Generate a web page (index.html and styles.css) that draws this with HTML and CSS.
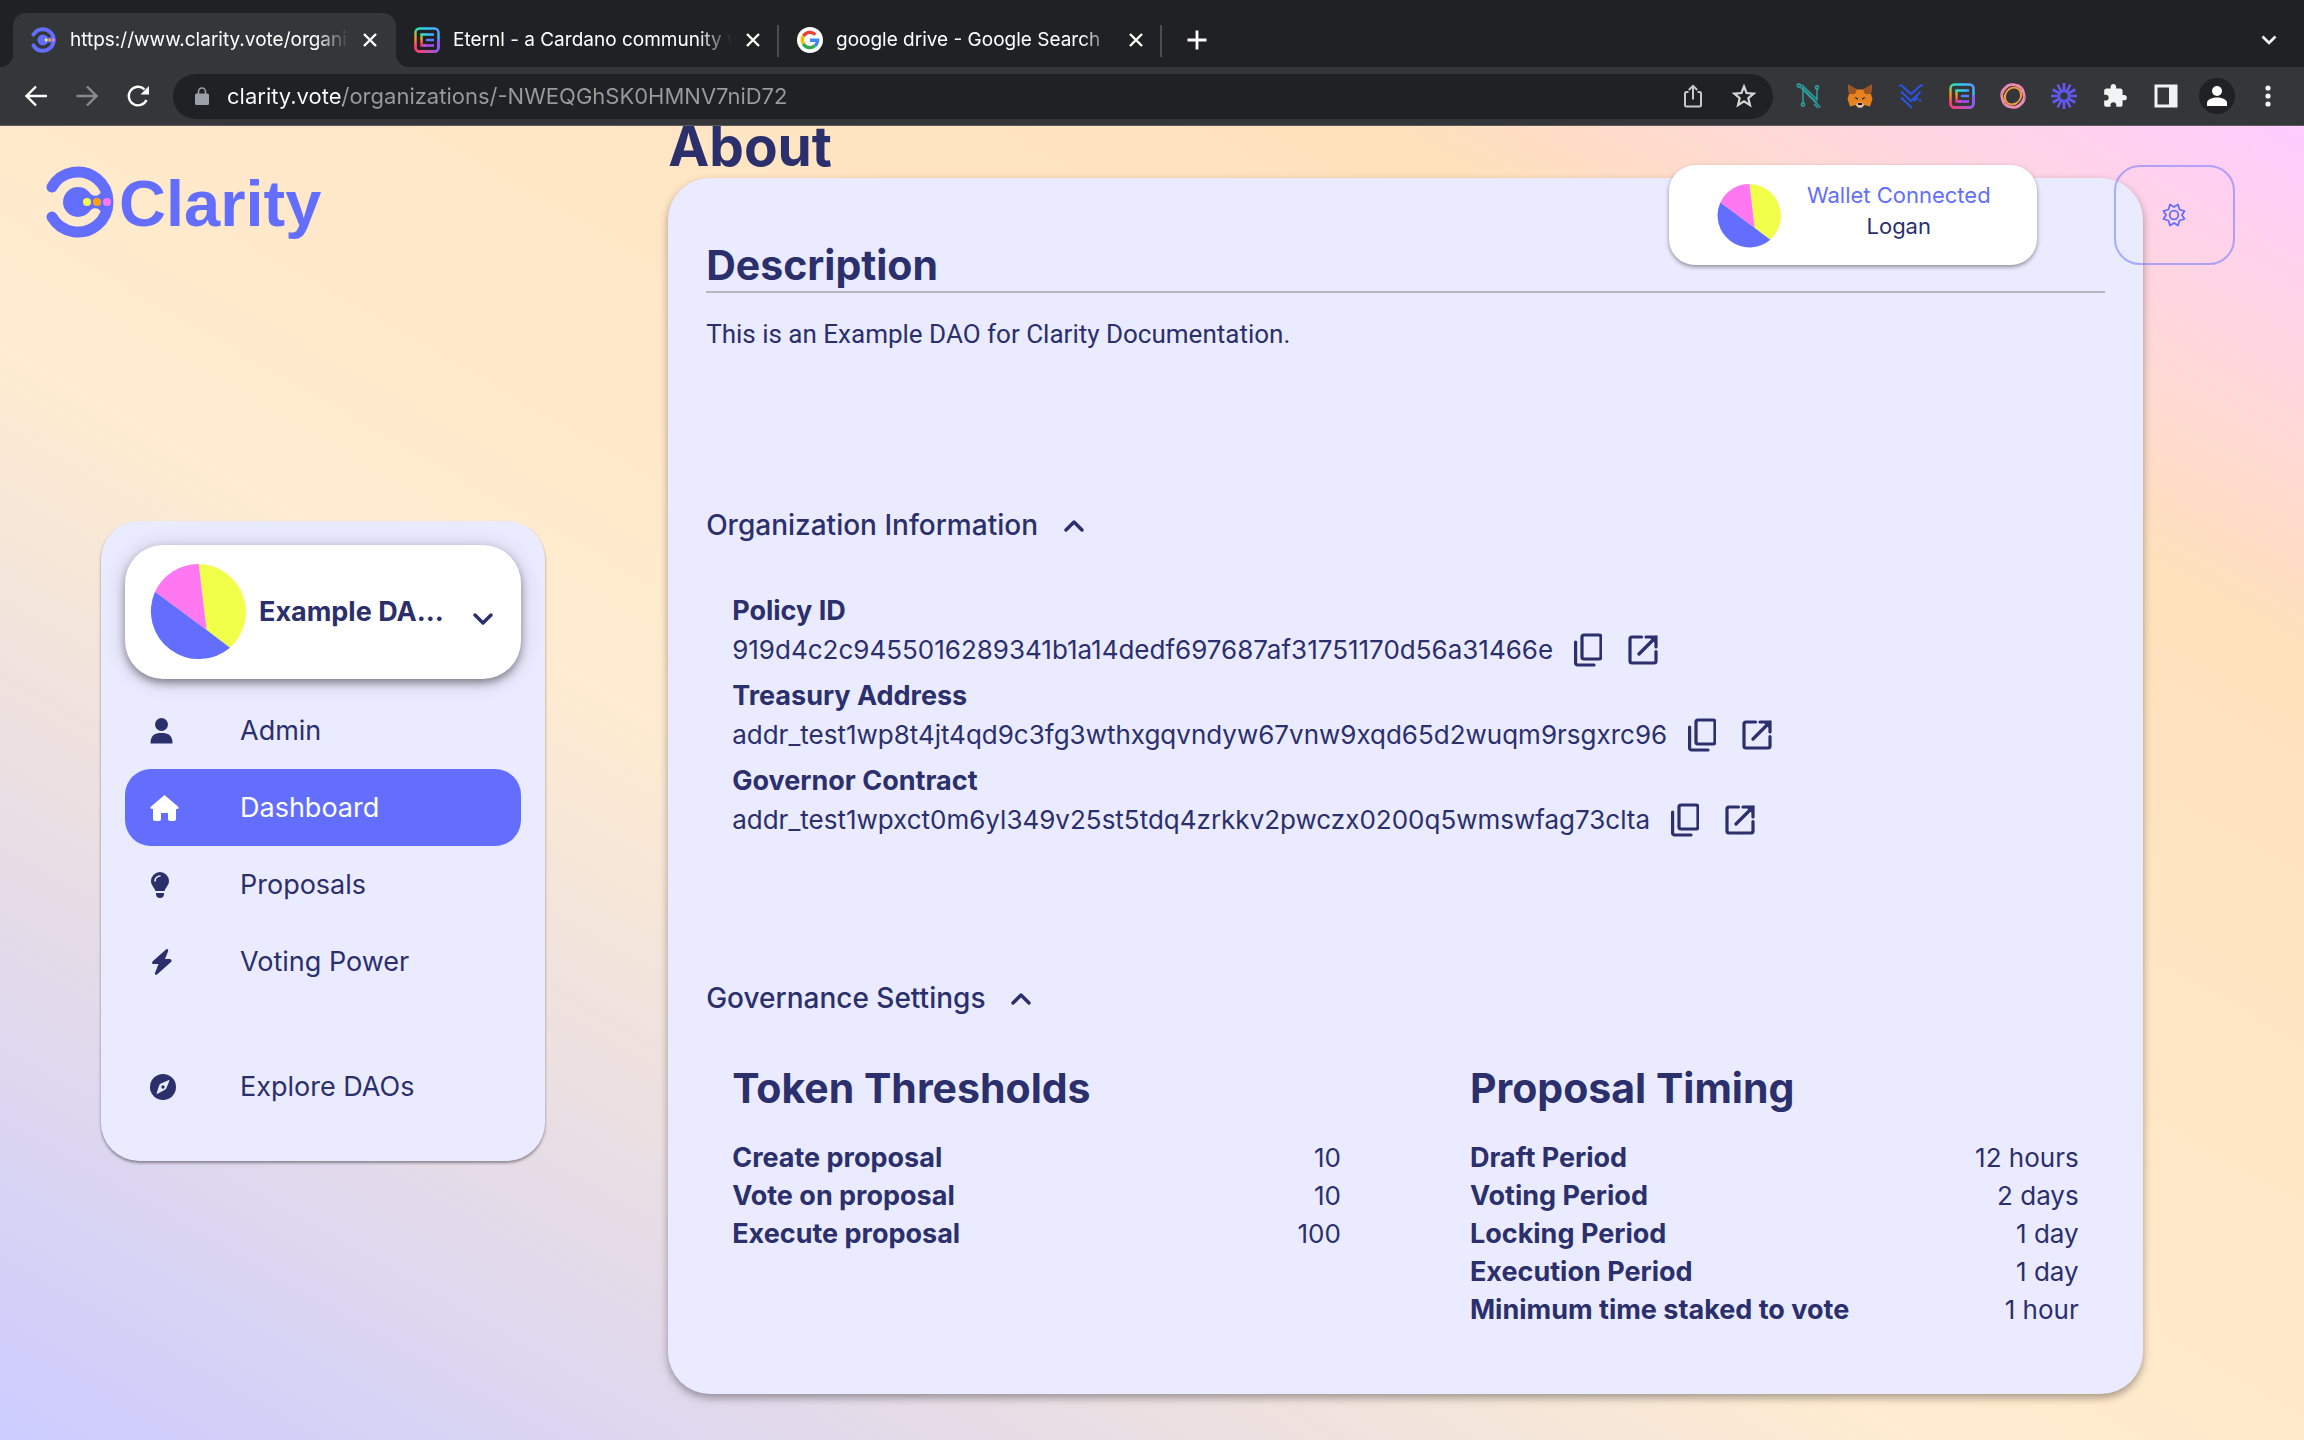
FILE: index.html
```html
<!DOCTYPE html>
<html lang="en">
<head>
    <meta charset="UTF-8">
    <meta name="viewport" content="width=device-width, initial-scale=1.0">
    <title>Clarity - Example DAO</title>
    <link rel="stylesheet" href="styles.css">
</head>
<body>
    <!-- Shared shapes -->
    <svg class="defs" aria-hidden="true">
        <defs>
            <linearGradient id="rainbow-a" x1="0" y1="1" x2="1" y2="0">
                <stop offset="0" stop-color="#ff2d78"/>
                <stop offset="0.3" stop-color="#ff9a1f"/>
                <stop offset="0.5" stop-color="#2fe6a0"/>
                <stop offset="0.75" stop-color="#35c8ff"/>
                <stop offset="1" stop-color="#5b9bff"/>
            </linearGradient>
            <linearGradient id="rainbow-b" x1="0" y1="0" x2="1" y2="0">
                <stop offset="0" stop-color="#ff3d6e"/>
                <stop offset="1" stop-color="#9d4dff"/>
            </linearGradient>
            <symbol id="mark" viewBox="0 0 70 72">
                <path d="M6 21 A30 30 0 1 1 6 51" fill="none" stroke="#636eff" stroke-width="11" stroke-linecap="round"/>
                <circle cx="32" cy="36" r="15" fill="#636eff"/>
                <path d="M40 24 Q50 35 56 25 L62 36 L56 47 Q50 37 40 48 Z" fill="#636eff"/>
                <circle cx="41" cy="36" r="4" fill="#f1ff4b"/>
                <circle cx="51" cy="36" r="4" fill="#ffa20f"/>
                <circle cx="61" cy="36" r="4" fill="#ff77f1"/>
            </symbol>
            <symbol id="pie" viewBox="0 0 288 288">
                <path d="M146 0 A144 144 0 0 1 240 251 L170 198 Z" fill="#f1ff4b"/>
                <path d="M146 0 A144 144 0 0 0 15 83 L170 198 Z" fill="#ff77f1"/>
                <path d="M15 83 A144 144 0 0 0 240 251 L170 198 Z" fill="#636eff"/>
            </symbol>
            <symbol id="eternl" viewBox="0 0 26 26">
                <rect x="1.5" y="1.5" width="23" height="23" rx="4" fill="none" stroke="url(#rainbow-a)" stroke-width="2.4"/>
                <path d="M1.500 17 V20.500 a4 4 0 0 0 4 4 H20.500 a4 4 0 0 0 4 -4 V12" fill="none" stroke="url(#rainbow-b)" stroke-width="2.4"/>
                <path d="M20 7.500 H7.500 V18.500 H12" fill="none" stroke="url(#rainbow-a)" stroke-width="2.4"/>
                <path d="M12 13 H20" stroke="#5f7dff" stroke-width="2.4" fill="none"/>
                <path d="M9 18.500 H20" stroke="#b04dff" stroke-width="2.4" fill="none"/>
            </symbol>
            <symbol id="close" viewBox="0 0 16 16">
                <path d="M2 2 L14 14 M14 2 L2 14" fill="none" stroke="#fff" stroke-width="2.4"/>
            </symbol>
            <symbol id="up" viewBox="0 0 20 13">
                <path d="M2 11 L10 3 L18 11" fill="none" stroke="currentColor" stroke-width="3.4" stroke-linecap="round" stroke-linejoin="round"/>
            </symbol>
            <symbol id="copy" viewBox="0 0 28 34">
                <rect x="8" y="2" width="19" height="24" rx="2" fill="none" stroke="currentColor" stroke-width="3.2"/>
                <path d="M1.600 9 V30 a2 2 0 0 0 2 2 H20" fill="none" stroke="currentColor" stroke-width="3.2" stroke-linecap="round"/>
            </symbol>
            <symbol id="open" viewBox="0 0 30 30">
                <path d="M13.500 2 H4 a2 2 0 0 0 -2 2 V26 a2 2 0 0 0 2 2 H26 a2 2 0 0 0 2 -2 V16.500 M18 2 H28 V12 M28 2 L11 19" fill="none" stroke="currentColor" stroke-width="3.2" stroke-linecap="round"/>
                <path d="M20 1 H29 V10 Z" fill="currentColor"/>
            </symbol>
        </defs>
    </svg>

    <header class="browser">
        <div class="tab-strip">
            <div class="tab active">
                <svg class="favicon"><use href="#mark"/></svg>
                <a class="tab-title" href="#">https://www.clarity.vote/organi</a>
                <button class="tab-close" aria-label="Close tab"><svg><use href="#close"/></svg></button>
            </div>
            <div class="tab">
                <svg class="favicon"><use href="#eternl"/></svg>
                <a class="tab-title" href="#">Eternl - a Cardano community w</a>
                <button class="tab-close" aria-label="Close tab"><svg><use href="#close"/></svg></button>
            </div>
            <div class="tab">
                <svg class="favicon" viewBox="0 0 26 26">
                    <circle cx="13" cy="13" r="13" fill="#fff"/>
                    <g fill="none" stroke-width="3.4">
                        <path d="M6.400 9.200 A7.600 7.600 0 0 1 18.400 7.600" stroke="#ea4335"/>
                        <path d="M6.400 16.800 A7.600 7.600 0 0 1 6.400 9.200" stroke="#fbbc05"/>
                        <path d="M17.900 18.800 A7.600 7.600 0 0 1 6.400 16.800" stroke="#34a853"/>
                        <path d="M13 13.200 H20.600 A7.600 7.600 0 0 1 17.900 18.800" stroke="#4285f4"/>
                    </g>
                </svg>
                <a class="tab-title" href="#">google drive - Google Search</a>
                <button class="tab-close" aria-label="Close tab"><svg><use href="#close"/></svg></button>
            </div>
            <button class="new-tab" aria-label="New tab">
                <svg viewBox="0 0 20 20"><path d="M10 0.500 V19.500 M0.500 10 H19.500" stroke="#fff" stroke-width="2.8"/></svg>
            </button>
            <button class="tab-search" aria-label="Search tabs">
                <svg viewBox="0 0 16 12"><path d="M1.500 2.500 L8 9 L14.500 2.500" fill="none" stroke="#fff" stroke-width="2.6"/></svg>
            </button>
        </div>

        <div class="toolbar">
            <button class="tool" aria-label="Back">
                <svg viewBox="0 0 26 26"><path d="M24 13 H4 M13 3.500 L3.500 13 L13 22.500" fill="none" stroke="#fff" stroke-width="2.4"/></svg>
            </button>
            <button class="tool" aria-label="Forward">
                <svg viewBox="0 0 26 26"><path d="M2.500 13 H22 M13 3.500 L22.500 13 L13 22.500" fill="none" stroke="#898a8d" stroke-width="2.4"/></svg>
            </button>
            <button class="tool" aria-label="Reload">
                <svg viewBox="0 0 26 26"><path d="M21.500 17 A9.300 9.300 0 1 1 19.500 6.300" fill="none" stroke="#fff" stroke-width="2.4"/><path d="M24 3 V11.500 H15.500 Z" fill="#fff"/></svg>
            </button>
            <div class="omnibox">
                <svg class="lock" viewBox="0 0 14 18"><rect y="6.500" width="14" height="11.500" rx="1.500" fill="#9aa0a6"/><path d="M3.500 7 V4.500 a3.500 3.500 0 0 1 7 0 V7" fill="none" stroke="#9aa0a6" stroke-width="1.6"/></svg>
                <input class="url" type="text" aria-label="Address" value="clarity.vote/organizations/-NWEQGhSK0HMNV7niD72">
                <button class="tool" aria-label="Share">
                    <svg viewBox="0 0 26 26"><path d="M8.500 9 H6.500 a1.500 1.500 0 0 0 -1.500 1.500 V22 a1.500 1.500 0 0 0 1.500 1.500 H19.500 a1.500 1.500 0 0 0 1.500 -1.500 V10.500 a1.500 1.500 0 0 0 -1.500 -1.500 H17.500 M13 16.500 V3 M8.800 7 L13 2.800 L17.200 7" fill="none" stroke="#c7c8c9" stroke-width="2"/></svg>
                </button>
                <button class="tool" aria-label="Bookmark">
                    <svg viewBox="0 0 26 26"><path d="M13 3.500 L15.600 10 L22.700 10.600 L17.300 15.200 L19 22.200 L13 18.400 L7 22.200 L8.700 15.200 L3.300 10.600 L10.400 10 Z" fill="none" stroke="#d5d6d7" stroke-width="2.2"/></svg>
                </button>
            </div>
            <button class="tool" aria-label="Nami">
                <svg viewBox="0 0 26 26"><g fill="none" stroke="#2a9d9a" stroke-width="1.6"><circle cx="2.800" cy="2.500" r="1.600"/><circle cx="21" cy="4.500" r="1.600"/><circle cx="7" cy="21.500" r="1.600"/><path d="M7 19.800 V5.500 L21 20 M21 6.200 V16.500 L5.500 1.500 M4 3.700 L24.500 24.500 M18 21 L22 25"/></g></svg>
            </button>
            <button class="tool" aria-label="MetaMask">
                <svg viewBox="0 0 26 26">
                    <path d="M1 1.500 L10 6.500 H16 L25 1.500 L24 11 L25.500 16 L23 23.500 L17.500 22 L15 24.500 H11 L8.500 22 L3 23.500 L0.500 16 L2 11 Z" fill="#e8821e"/>
                    <path d="M1 1.500 L10 6.500 L8 11 L2 11 Z M25 1.500 L16 6.500 L18 11 L24 11 Z" fill="#9c5424"/>
                    <path d="M7 14 L11 15 L10.500 17 Z M19 14 L15 15 L15.500 17 Z" fill="#233447"/>
                    <path d="M9 22 L11 19.500 H15 L17 22 L15 24.500 H11 Z" fill="#d8c6b5"/>
                    <path d="M11 20 H15 V22 H11 Z" fill="#16161a"/>
                </svg>
            </button>
            <button class="tool" aria-label="Flint">
                <svg viewBox="0 0 26 26"><g fill="none" stroke="#2c54e0" stroke-width="2.2"><path d="M1 2.500 H3.500 L13 11 L22.500 2.500 H25"/><path d="M3 8.500 L13 18 L22.500 9"/><path d="M3 14.500 L14 25 M16 18 L20 14.500"/></g><circle cx="22" cy="17.500" r="1.300" fill="#2c54e0"/></svg>
            </button>
            <button class="tool" aria-label="Eternl">
                <svg><use href="#eternl"/></svg>
            </button>
            <button class="tool" aria-label="GeroWallet">
                <svg viewBox="0 0 26 26"><g fill="none" stroke="#f48fb5" stroke-width="1.2"><ellipse cx="13" cy="13" rx="12.300" ry="10.500" transform="rotate(20 13 13)"/><ellipse cx="13" cy="13" rx="12.300" ry="10.500" transform="rotate(75 13 13)"/><ellipse cx="13" cy="13" rx="12.300" ry="10.500" transform="rotate(130 13 13)"/></g><g fill="none" stroke="#f9a13c" stroke-width="1.2"><ellipse cx="13" cy="13" rx="9.300" ry="7.500" transform="rotate(-30 13 13)"/><ellipse cx="13" cy="13" rx="9" ry="7.500" transform="rotate(-75 13 13)"/></g></svg>
            </button>
            <button class="tool" aria-label="Loom">
                <svg viewBox="0 0 26 26"><circle cx="13" cy="13" r="5" fill="none" stroke="#6259f5" stroke-width="2.4"/><g stroke="#6259f5" stroke-width="2.6"><path d="M13 0 V8 M13 18 V26 M0 13 H8 M18 13 H26 M6.500 1.700 L10.500 8.700 M15.500 17.300 L19.500 24.300 M1.700 6.500 L8.700 10.500 M17.300 15.500 L24.300 19.500 M1.700 19.500 L8.700 15.500 M17.300 10.500 L24.300 6.500 M6.500 24.300 L10.500 17.300 M15.500 8.700 L19.500 1.700"/></g></svg>
            </button>
            <button class="tool" aria-label="Extensions">
                <svg viewBox="0 0 24 24"><path d="M20.500 11H19V7c0-1.100-.9-2-2-2h-4V3.500C13 2.120 11.880 1 10.500 1S8 2.120 8 3.500V5H4c-1.100 0-1.990.9-1.990 2v3.800H3.500c1.490 0 2.700 1.210 2.700 2.700s-1.210 2.700-2.700 2.700H2V20c0 1.100.9 2 2 2h3.800v-1.500c0-1.490 1.210-2.700 2.700-2.700s2.700 1.210 2.700 2.700V22H17c1.100 0 2-.9 2-2v-4h1.500c1.380 0 2.500-1.120 2.500-2.500S21.880 11 20.500 11z" fill="#f1f3f4"/></svg>
            </button>
            <button class="tool" aria-label="Side panel">
                <svg viewBox="0 0 26 26"><path d="M1.500 1.500 H24.500 V24.500 H1.500 Z M4.500 4.500 V21.500 H16 V4.500 Z" fill="#f1f3f4" fill-rule="evenodd"/></svg>
            </button>
            <button class="tool" aria-label="Profile">
                <svg class="profile" viewBox="0 0 36 36"><circle cx="18" cy="18" r="18" fill="#202124"/><circle cx="18" cy="13" r="5" fill="#fff"/><path d="M8 28 V25 C8 21 14 19.500 18 19.500 C22 19.500 28 21 28 25 V28 Z" fill="#fff"/></svg>
            </button>
            <button class="tool" aria-label="Menu">
                <svg viewBox="0 0 26 26"><g fill="#f1f3f4"><circle cx="13" cy="5" r="2.600"/><circle cx="13" cy="13" r="2.600"/><circle cx="13" cy="21" r="2.600"/></g></svg>
            </button>
        </div>
    </header>

    <div class="page">
        <div class="topbar">
            <a class="logo" href="#">
                <svg><use href="#mark"/></svg>
                <span>Clarity</span>
            </a>
            <button class="wallet">
                <svg><use href="#pie"/></svg>
                <span class="wallet-text">
                    <span class="wallet-status">Wallet Connected</span>
                    <span>Logan</span>
                </span>
            </button>
            <button class="settings" aria-label="Settings">
                <svg viewBox="0 0 24 24"><path d="M8 1.500 L12 4 L16 1.500 L17.500 6.500 L22.500 8 L20 12 L22.500 16 L17.500 17.500 L16 22.500 L12 20 L8 22.500 L6.500 17.500 L1.500 16 L4 12 L1.500 8 L6.500 6.500 Z" fill="none" stroke="currentColor" stroke-width="1.8" stroke-linejoin="round"/><circle cx="12" cy="12" r="4.300" fill="none" stroke="currentColor" stroke-width="1.8"/></svg>
            </button>
        </div>

        <aside class="side">
            <div class="sidebar">
                <div class="dao-picker">
                    <svg class="dao-logo"><use href="#pie"/></svg>
                    <select class="dao-select" aria-label="Organization">
                        <option>Example DA...</option>
                    </select>
                    <svg class="dao-arrow"><use href="#up"/></svg>
                </div>
                <nav class="menu">
                    <a class="menu-item" href="#">
                        <svg viewBox="0 0 30 26"><circle cx="11.500" cy="6.500" r="6.500" fill="currentColor"/><path d="M0.500 25.500 C0.500 17 5 15 11.500 15 S22.500 17 22.500 25.500 Z" fill="currentColor"/></svg>
                        Admin
                    </a>
                    <a class="menu-item current" href="#">
                        <svg viewBox="0 0 30 26"><path d="M14.500 0 L28.500 12 Q29 14 27 14 H26 V24 Q26 26 24 26 H20 Q18 26 18 24 V18 H11 V24 Q11 26 9 26 H5 Q3 26 3 24 V14 H2 Q0 14 0.500 12 Z" fill="currentColor"/></svg>
                        Dashboard
                    </a>
                    <a class="menu-item" href="#">
                        <svg viewBox="0 0 30 26"><path d="M10 0 A9 9 0 0 1 19 9 C19 13 16 15 14.500 19 H5.500 C4 15 1 13 1 9 A9 9 0 0 1 10 0 Z M6 21 H14 V22 A4 4 0 0 1 6 22 Z" fill="currentColor"/><path d="M5 9 A5 5 0 0 1 10 4" fill="none" stroke="#eaebff" stroke-width="1.6" stroke-linecap="round"/></svg>
                        Proposals
                    </a>
                    <a class="menu-item" href="#">
                        <svg viewBox="0 0 30 26"><path d="M16.500 0 Q19 0 18 2.500 L15 10 H20 Q22.500 11 21 13 L7 25.500 Q4.500 26.500 5 24 L8.500 15 H3 Q1 14 3 12 Z" fill="currentColor"/></svg>
                        Voting Power
                    </a>
                    <a class="menu-item explore" href="#">
                        <svg viewBox="0 0 30 26"><circle cx="13" cy="13" r="13" fill="currentColor"/><path d="M19 6.500 L15.500 15 L7 19.500 L10 10.500 Z" fill="#eaebff" stroke="#eaebff" stroke-linejoin="round"/><circle cx="13" cy="13" r="1.700" fill="currentColor"/></svg>
                        Explore DAOs
                    </a>
                </nav>
            </div>
        </aside>

        <main class="content">
            <h1>About</h1>
            <section class="card">
                <h2 class="ruled">Description</h2>
                <p class="description">This is an Example DAO for Clarity Documentation.</p>

                <button class="toggle" aria-expanded="true">Organization Information <svg><use href="#up"/></svg></button>
                <dl class="org-info">
                    <dt>Policy ID</dt>
                    <dd>
                        <span>919d4c2c9455016289341b1a14dedf697687af31751170d56a31466e</span>
                        <button aria-label="Copy"><svg class="copy"><use href="#copy"/></svg></button>
                        <a href="#" aria-label="Open"><svg class="open"><use href="#open"/></svg></a>
                    </dd>
                    <dt>Treasury Address</dt>
                    <dd>
                        <span>addr_test1wp8t4jt4qd9c3fg3wthxgqvndyw67vnw9xqd65d2wuqm9rsgxrc96</span>
                        <button aria-label="Copy"><svg class="copy"><use href="#copy"/></svg></button>
                        <a href="#" aria-label="Open"><svg class="open"><use href="#open"/></svg></a>
                    </dd>
                    <dt>Governor Contract</dt>
                    <dd>
                        <span>addr_test1wpxct0m6yl349v25st5tdq4zrkkv2pwczx0200q5wmswfag73clta</span>
                        <button aria-label="Copy"><svg class="copy"><use href="#copy"/></svg></button>
                        <a href="#" aria-label="Open"><svg class="open"><use href="#open"/></svg></a>
                    </dd>
                </dl>

                <button class="toggle" aria-expanded="true">Governance Settings <svg><use href="#up"/></svg></button>
                <div class="governance">
                    <div>
                        <h2>Token Thresholds</h2>
                        <table>
                            <tr><th scope="row">Create proposal</th><td>10</td></tr>
                            <tr><th scope="row">Vote on proposal</th><td>10</td></tr>
                            <tr><th scope="row">Execute proposal</th><td>100</td></tr>
                        </table>
                    </div>
                    <div>
                        <h2>Proposal Timing</h2>
                        <table>
                            <tr><th scope="row">Draft Period</th><td>12 hours</td></tr>
                            <tr><th scope="row">Voting Period</th><td>2 days</td></tr>
                            <tr><th scope="row">Locking Period</th><td>1 day</td></tr>
                            <tr><th scope="row">Execution Period</th><td>1 day</td></tr>
                            <tr><th scope="row">Minimum time staked to vote</th><td>1 hour</td></tr>
                        </table>
                    </div>
                </div>
            </section>
        </main>
    </div>
</body>
</html>
```

FILE: styles.css
```css
* {
    box-sizing: border-box;
}
body {
    margin: 0;
    min-height: 100vh;
    display: flex;
    flex-direction: column;
    font-family: Inter, sans-serif;
    font-size: 26px;
    line-height: 38px;
    color: #2b2f6b;
}
button {
    font: inherit;
    color: inherit;
    background: none;
    border: 0;
    padding: 0;
    cursor: pointer;
}
a {
    color: inherit;
    text-decoration: none;
}
svg {
    display: block;
    flex: none;
}
.defs {
    position: absolute;
    width: 0;
    height: 0;
}

/* Browser chrome */
.browser {
    background-color: #35363a;
    border-bottom: 1px solid #5b5a5c;
}
.tab-strip {
    display: flex;
    align-items: flex-end;
    height: 67px;
    padding: 0 27px 0 13px;
    background-color: #202124;
}
.tab {
    position: relative;
    display: flex;
    align-items: center;
    gap: 13px;
    width: 383px;
    height: 54px;
    padding: 0 18px;
    font-size: 19px;
    color: #fff;
}
.tab.active {
    background-color: #35363a;
    border-radius: 13px 13px 0 0;
}
/* Rounded feet of the active tab */
.tab.active::before,
.tab.active::after {
    content: '';
    position: absolute;
    bottom: 0;
    width: 13px;
    height: 13px;
}
.tab.active::before {
    left: -13px;
    background: radial-gradient(circle at 0 0, transparent 13px, #35363a 13px);
}
.tab.active::after {
    right: -13px;
    background: radial-gradient(circle at 100% 0, transparent 13px, #35363a 13px);
}
.tab:not(.active)::after {
    content: '';
    position: absolute;
    right: 0;
    top: 12px;
    width: 2px;
    height: 32px;
    background-color: #4a4c50;
}
.favicon {
    width: 26px;
    height: 26px;
}
.tab-title {
    flex: 1;
    overflow: hidden;
    white-space: nowrap;
    mask-image: linear-gradient(to right, #000 88%, transparent);
}
.tab-close svg {
    width: 16px;
    height: 16px;
}
.new-tab {
    height: 54px;
    margin-left: 25px;
}
.new-tab svg {
    width: 20px;
    height: 20px;
}
.tab-search {
    height: 54px;
    margin-left: auto;
}
.tab-search svg {
    width: 16px;
    height: 12px;
}
.toolbar {
    display: flex;
    align-items: center;
    height: 58px;
    padding: 0 11px 0 10px;
}
.tool {
    display: flex;
    align-items: center;
    justify-content: center;
    width: 51px;
    height: 45px;
}
.tool svg {
    width: 26px;
    height: 26px;
}
.tool .profile {
    width: 36px;
    height: 36px;
}
.omnibox {
    flex: 1;
    display: flex;
    align-items: center;
    height: 45px;
    margin: 0 10px;
    padding: 0 4px 0 22px;
    border-radius: 23px;
    background-color: #202124;
}
.lock {
    width: 14px;
    height: 18px;
}
.url {
    flex: 1;
    min-width: 0;
    margin-left: 18px;
    padding: 0;
    border: 0;
    outline: 0;
    font: inherit;
    font-size: 22px;
    /* host in white, path in grey */
    color: transparent;
    background: linear-gradient(to right, #fff 116px, #9a9b9d 116px);
    background-clip: text;
    -webkit-background-clip: text;
}

/* Page */
.page {
    position: relative;
    flex: 1;
    display: grid;
    grid-template-columns: 29% 64% 1fr;
    align-items: start;
    overflow: hidden;
    background: linear-gradient(to top right, #ccccff, #ffecd0 42%, #ffe1bb 80%, #ffccff);
}
.topbar {
    position: absolute;
    top: 39px;
    left: 2%;
    right: 3%;
    display: flex;
    align-items: center;
    height: 100px;
    z-index: 1;
}
.logo {
    display: flex;
    align-items: center;
    gap: 3px;
    margin-right: auto;
    padding-bottom: 26px;
    font-family: "Liberation Sans", sans-serif;
    font-size: 65px;
    font-weight: 700;
    color: #636eff;
}
.logo svg {
    width: 70px;
    height: 72px;
}
.logo span {
    padding-top: 4px;
}
.wallet {
    display: flex;
    gap: 26px;
    width: 368px;
    height: 100px;
    padding: 15px 48px;
    border-radius: 26px;
    background-color: #fff;
    box-shadow: 0 2px 4px rgba(0, 0, 0, 0.4);
}
.wallet svg {
    width: 64px;
    height: 64px;
    margin-top: 4px;
}
.wallet-text {
    display: flex;
    flex-direction: column;
    align-items: center;
    font-size: 22px;
    line-height: 31px;
    white-space: nowrap;
}
.wallet-status {
    color: #636eff;
}
.settings {
    display: flex;
    align-items: center;
    justify-content: center;
    width: 121px;
    height: 100px;
    margin-left: 77px;
    border: 2px solid rgba(99, 110, 255, 0.5);
    border-radius: 26px;
    color: #636eff;
}
.settings svg {
    width: 24px;
    height: 24px;
}

/* Sidebar */
.side {
    padding: 395px 123px 0 101px;
}
.sidebar {
    padding: 24px 24px 36px;
    border-radius: 38px;
    background-color: #eaebff;
    box-shadow: 0 2px 3px rgba(0, 0, 0, 0.4);
    font-size: 27px;
}
.dao-picker {
    position: relative;
    height: 134px;
    margin-bottom: 13px;
    border-radius: 38px;
    background-color: #fff;
    box-shadow: 0 4px 8px rgba(0, 0, 0, 0.4), 0 2px 24px rgba(0, 0, 0, 0.14);
}
.dao-select {
    width: 100%;
    height: 100%;
    padding: 0 60px 0 134px;
    border: 0;
    border-radius: 38px;
    appearance: none;
    background: none;
    font: inherit;
    font-weight: 700;
    color: inherit;
}
.dao-logo {
    position: absolute;
    left: 25px;
    top: 19px;
    width: 96px;
    height: 96px;
    pointer-events: none;
}
.dao-arrow {
    position: absolute;
    right: 28px;
    top: 68px;
    width: 20px;
    height: 13px;
    transform: rotate(180deg);
    pointer-events: none;
}
.menu-item {
    display: flex;
    align-items: center;
    gap: 60px;
    height: 77px;
    padding-left: 25px;
    border-radius: 26px;
}
.menu-item svg {
    width: 30px;
    height: 26px;
}
.menu-item.current {
    background-color: #636eff;
    color: #fff;
}
.menu-item.explore {
    margin-top: 48px;
}

/* Main content */
h1,
h2 {
    margin: 0;
    font-weight: 700;
}
h1 {
    margin-top: -12px;
    font-size: 55px;
    line-height: 64px;
}
h2 {
    font-size: 41px;
    line-height: 48px;
}
.card {
    padding: 63px 38px 65px;
    border-radius: 42px;
    background-color: #eaebff;
    box-shadow: 0 4px 8px rgba(0, 0, 0, 0.35);
}
.ruled {
    padding-bottom: 2px;
    border-bottom: 2px solid #b7b8bf;
}
.description {
    margin: 22px 0 153px;
    font-family: Roboto, sans-serif;
}
.toggle {
    display: flex;
    align-items: center;
    gap: 26px;
    font-size: 28px;
    font-weight: 500;
}
.toggle svg {
    width: 20px;
    height: 13px;
}
.org-info {
    margin: 48px 26px 139px;
}
.org-info dt {
    font-size: 27px;
    font-weight: 700;
}
.org-info dd {
    display: flex;
    align-items: center;
    height: 40px;
    margin: 0 0 7px;
}
.copy {
    width: 28px;
    height: 34px;
    margin: 0 26px 0 21px;
}
.open {
    width: 30px;
    height: 30px;
}
.governance {
    display: grid;
    grid-template-columns: 1fr 1fr;
    gap: 129px;
    margin: 47px 26px 0;
}
table {
    width: 100%;
    margin-top: 27px;
    border-collapse: collapse;
}
th,
td {
    padding: 0;
    text-align: left;
}
th {
    font-size: 27px;
}
td {
    text-align: right;
}
```
